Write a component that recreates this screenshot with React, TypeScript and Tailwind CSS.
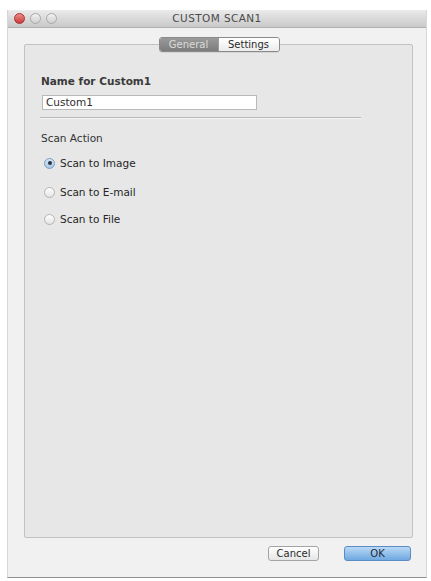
import React from "react";

const font = { fontFamily: '"DejaVu Sans", "Liberation Sans", sans-serif' };

const Radio = ({ checked, label }: { checked?: boolean; label: string }) => {
  return (
    <div className="flex items-center h-[14px] ml-[3px]">
      <div
        className={
          checked
            ? "w-[11px] h-[11px] rounded-full border border-[#7d9cc0] bg-gradient-to-b from-[#d6e6f6] to-[#a9c6e6] flex items-center justify-center"
            : "w-[11px] h-[11px] rounded-full border border-[#b4b4b4] bg-gradient-to-b from-[#ffffff] to-[#e4e4e4]"
        }
      >
        {checked && <div className="w-[4px] h-[4px] rounded-full bg-[#2a3440]" />}
      </div>
      <span className="ml-[5px] text-[10.5px] text-[#262626] leading-[14px]">{label}</span>
    </div>
  );
};

const App = () => {
  return (
    <div className="w-[431px] h-[581px] bg-white pl-[7px] pt-[10px]" style={font}>
      <div className="w-[420px] h-[568px] flex flex-col bg-[#f1f1f1] border-x border-[#d6d6d6] border-b border-b-[#8f8f8f]">
        {/* title bar */}
        <div className="relative h-[18px] shrink-0 bg-gradient-to-b from-[#ebebeb] to-[#c9c9c9] border-b border-[#b0b0b0] flex items-center justify-center">
          <div className="absolute left-[6px] top-[3px] flex gap-[5px]">
            <div className="w-[11px] h-[11px] rounded-full bg-gradient-to-b from-[#f08a8a] to-[#c83a3a] border border-[#a83030]" />
            <div className="w-[11px] h-[11px] rounded-full bg-gradient-to-b from-[#f2f2f2] to-[#cfcfcf] border border-[#a9a9a9]" />
            <div className="w-[11px] h-[11px] rounded-full bg-gradient-to-b from-[#f2f2f2] to-[#cfcfcf] border border-[#a9a9a9]" />
          </div>
          <span className="text-[10.5px] text-[#4a4a4a] tracking-[0.4px]">CUSTOM SCAN1</span>
        </div>

        {/* tabs */}
        <div className="relative z-10 flex justify-center pt-[9px] pl-[4px]">
          <div className="flex h-[15px] rounded-[3px] border border-[#8a8a8a] overflow-hidden shadow-[0_1px_0_rgba(0,0,0,0.08)]">
            <div className="w-[58px] flex items-center justify-center bg-gradient-to-b from-[#9a9a9a] to-[#7c7c7c] text-[10px] text-[#dcdcdc]">
              General
            </div>
            <div className="w-[61px] flex items-center justify-center bg-gradient-to-b from-[#ffffff] to-[#ececec] border-l border-[#9a9a9a] text-[10px] text-[#2a2a2a]">
              Settings
            </div>
          </div>
        </div>

        {/* panel */}
        <div className="ml-[16px] w-[389px] h-[494px] -mt-[8px] bg-[#e7e7e7] border border-[#c2c2c2] rounded-[2px] pt-[29px] pl-[16px]">
          <div className="text-[10.5px] leading-[14px] text-[#3a3a3a] font-semibold">Name for Custom1</div>
          <div className="mt-[7px] ml-[1px] w-[215px] h-[15px] bg-white border border-[#b9b9b9] flex items-center pl-[3px] text-[10.5px] text-[#2e2e2e]">
            Custom1
          </div>
          <div className="mt-[7px] -ml-[1px] w-[321px] h-[1px] bg-[#b8b8b8] border-b border-b-[#f6f6f6] box-content" />
          <div className="mt-[12px] text-[10.5px] leading-[14px] text-[#333333]">Scan Action</div>
          <div className="mt-[11px]">
            <Radio checked label="Scan to Image" />
          </div>
          <div className="mt-[15px]">
            <Radio label="Scan to E-mail" />
          </div>
          <div className="mt-[13px]">
            <Radio label="Scan to File" />
          </div>
        </div>

        {/* buttons */}
        <div className="flex justify-end gap-[25px] pr-[15px] mt-[8px]">
          <button className="w-[51px] h-[15px] rounded-[3px] border border-[#a4a4a4] bg-gradient-to-b from-[#ffffff] to-[#e6e6e6] text-[10px] text-[#2a2a2a] flex items-center justify-center">
            Cancel
          </button>
          <button className="w-[67px] h-[15px] rounded-[3px] border border-[#5d8cc4] bg-gradient-to-b from-[#b9d9f6] to-[#6fa8e0] text-[10px] text-[#1e2a3a] flex items-center justify-center">
            OK
          </button>
        </div>
      </div>
    </div>
  );
};

export default App;
